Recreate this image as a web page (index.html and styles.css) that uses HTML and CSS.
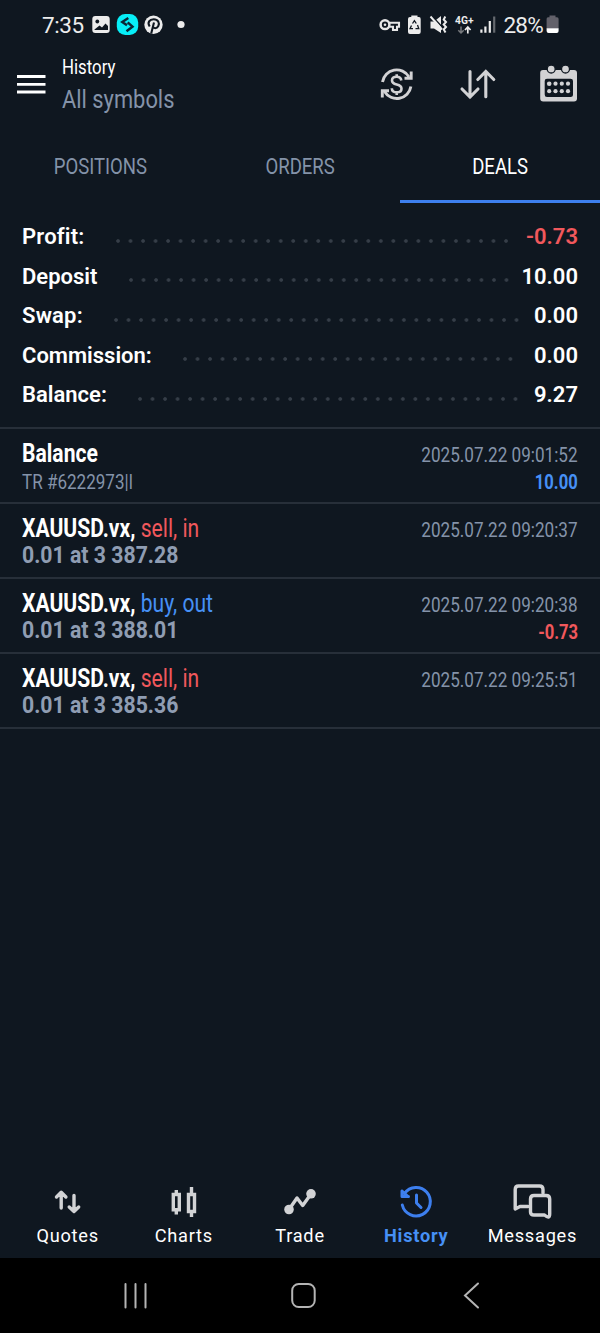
FILE: index.html
```html
<!DOCTYPE html>
<html lang="en">
<head>
<meta charset="utf-8">
<title>History</title>
<link rel="stylesheet" href="styles.css">
</head>
<body>
<div class="screen">
  <div class="status">
    <span class="clock">7:35</span>
    <svg class="st-left" width="96" height="24" viewBox="90 13 96 24">
      <rect x="92.300" y="16" width="17.400" height="17" rx="3" fill="#ececec"/>
      <circle cx="97.300" cy="21.500" r="1.900" fill="#0f1720"/>
      <path d="M94.500 29.500L99.500 25.500L102 27.500L105.500 23.500L108 26V30H94.500Z" fill="#0f1720"/>
      <rect x="116.800" y="14" width="21.400" height="21" rx="8.500" fill="#07eef7"/>
      <path d="M128.300 18L122.300 22L127 25.300M127.700 22.300L132.500 26.700L126.500 31.300" fill="none" stroke="#0b2635" stroke-width="2.500"/>
      <circle cx="153.500" cy="24.800" r="9.200" fill="#ececec"/>
      <path d="M149.700 26.500C147 22.500 149.500 19.300 153.700 19.300C158 19.300 160 23 158.200 26.300C156.800 29 153.500 28.700 152.900 26.500M154 22.600L151.200 33.500" fill="none" stroke="#0f1720" stroke-width="2.100"/>
      <circle cx="181" cy="24.500" r="3.600" fill="#ececec"/>
    </svg>
    <svg class="st-right" width="122" height="24" viewBox="377 13 122 24">
      <circle cx="385" cy="24.700" r="4.400" fill="none" stroke="#e6e6e6" stroke-width="2.500"/>
      <circle cx="385" cy="24.700" r="1.300" fill="#e6e6e6"/>
      <path d="M389.500 22.800H399V26.700H397V30H393V26.700H389.500" fill="none" stroke="#e6e6e6" stroke-width="2.100"/>
      <path d="M411.300 17V15.500H417.500V17H419Q420.700 17 420.700 19V32Q420.700 34 418.700 34H410Q408 34 408 32V19Q408 17 410 17Z" fill="#ececec"/>
      <path d="M412.500 23.500L414.400 20.700L416.300 23.500M417.500 25L418.800 28.700H415.500M413 28.700H410L411.500 25.500" fill="none" stroke="#0f1720" stroke-width="1.300"/>
      <path d="M430.500 21.500H434L441 16V33L434 28.500H430.500Z" fill="#ececec"/>
      <path d="M432.500 16.500L443 28" stroke="#0f1720" stroke-width="1.600"/>
      <path d="M430.500 16.500L442 29.500" stroke="#ececec" stroke-width="1.900"/>
      <path d="M445.300 16.500L443.700 19.500L446 22L443.700 24.500L446 27L443.700 29.500L445.500 32.500" fill="none" stroke="#ececec" stroke-width="2"/>
      <text class="net" x="455" y="23.700" textLength="18.500" lengthAdjust="spacingAndGlyphs">4G+</text>
      <path d="M461 26.500V33M458.300 30.200L461 33L463.700 30.200" fill="none" stroke="#77797d" stroke-width="1.500"/>
      <path d="M467.800 33.500V27.300M465 30L467.800 27L470.600 30" fill="none" stroke="#ececec" stroke-width="1.700"/>
      <path d="M481.400 29.500V32.700M485.400 26.500V32.700M489.800 21V32.700" stroke="#ececec" stroke-width="2.200"/>
      <path d="M494.200 16.500V32.700" stroke="#65696f" stroke-width="2.200"/>
    </svg>
    <span class="percent">28%</span>
    <svg class="st-batt" width="13" height="20" viewBox="546 14 13 20">
      <path d="M549.500 17.200V15.500H555.500V17.200H557Q558.600 17.200 558.600 19V28.500H546.600V19Q546.600 17.200 548 17.200Z" fill="#62616a"/>
      <path d="M546.600 28.300H558.600V31Q558.600 33 556.600 33H548.600Q546.600 33 546.600 31Z" fill="#fff"/>
    </svg>
  </div>

  <header class="appbar">
    <svg class="burger" width="30" height="22" viewBox="16 73 30 22"><path d="M17 76.500H45.500M17 84.300H45.500M17 92H45.500" stroke="#fff" stroke-width="2.800"/></svg>
    <div class="titles">
      <div class="title"><span class="cond t-hist">History</span></div>
      <div class="subtitle"><span class="cond t-sym">All symbols</span></div>
    </div>
    <svg class="actions" width="202" height="44" viewBox="378 62 202 44" fill="none" stroke="#d2d2d4">
      <path d="M382.500 82A14.300 14.300 0 0 1 409 77M410.900 86.500A14.300 14.300 0 0 1 384.500 91.500" stroke-width="2.900"/>
      <path d="M411.200 71.500V78.300H404.500M382.300 97.500V90.700H389" stroke-width="2.900"/>
      <path d="M401.300 80.500C401 77.800 399 76.800 396.700 76.800C393.800 76.800 392 78.300 392 80.500C392 83 394 83.800 396.700 84.500C399.600 85.200 401.500 86.200 401.500 88.700C401.500 91 399.500 92.300 396.700 92.300C394 92.300 391.900 91 391.800 88.200M396.700 74.300V77M396.700 92V95" stroke-width="2.600"/>
      <path d="M470 71.500V97M462 89L470 97L478 89M485.800 96.800V71.500M477.800 79.500L485.800 71.500L493.800 79.500" stroke-width="3.100" stroke-linecap="round"/>
      <path fill-rule="evenodd" d="M543 70H574Q577 70 577 73V98.500Q577 101.500 574 101.500H543.200Q540.200 101.500 540.200 98.500V73Q540.200 70 543 70ZM547 78.800Q544.700 78.800 544.700 81V94.500Q544.700 97 547 97H570.500Q573 97 573 94.500V81Q573 78.800 570.500 78.800Z" fill="#d2d2d4" stroke="none"/>
      <g fill="#d2d2d4" stroke="#0f1720" stroke-width="1.300"><circle cx="551.200" cy="69" r="4"/><circle cx="565.500" cy="69" r="4"/></g>
      <g fill="#d2d2d4" stroke="none"><circle cx="549.200" cy="83.700" r="2.300"/><circle cx="555.500" cy="83.700" r="2.100"/><circle cx="561.800" cy="83.700" r="2.100"/><circle cx="568" cy="83.700" r="2.100"/><circle cx="549.200" cy="91.200" r="2.100"/><circle cx="555.500" cy="91.200" r="2.100"/><circle cx="561.800" cy="91.200" r="2.100"/><circle cx="568" cy="91.200" r="2.100"/></g>
    </svg>
  </header>

  <nav class="tabs">
    <div class="tab"><span class="cond">POSITIONS</span></div>
    <div class="tab"><span class="cond">ORDERS</span></div>
    <div class="tab active"><span class="cond">DEALS</span></div>
  </nav>

  <section class="summary">
    <div class="sum profit"><span class="label">Profit:</span><i class="dots"></i><b class="value red">-0.73</b></div>
    <div class="sum deposit"><span class="label">Deposit</span><i class="dots"></i><b class="value">10.00</b></div>
    <div class="sum swap"><span class="label">Swap:</span><i class="dots"></i><b class="value">0.00</b></div>
    <div class="sum commission"><span class="label">Commission:</span><i class="dots"></i><b class="value">0.00</b></div>
    <div class="sum balance"><span class="label">Balance:</span><i class="dots"></i><b class="value">9.27</b></div>
  </section>

  <section class="deals">
    <div class="deal">
      <div class="line"><span class="cond name"><b>Balance</b></span><span class="cond date">2025.07.22 09:01:52</span></div>
      <div class="line second"><span class="cond note">TR #6222973|l</span><span class="cond result blue">10.00</span></div>
    </div>
    <div class="deal">
      <div class="line"><span class="cond name"><b>XAUUSD.vx,</b> <span class="red">sell, in</span></span><span class="cond date">2025.07.22 09:20:37</span></div>
      <div class="line second"><span class="cond volume">0.01 at 3 387.28</span></div>
    </div>
    <div class="deal">
      <div class="line"><span class="cond name"><b>XAUUSD.vx,</b> <span class="blue">buy, out</span></span><span class="cond date">2025.07.22 09:20:38</span></div>
      <div class="line second"><span class="cond volume">0.01 at 3 388.01</span><span class="cond result red">-0.73</span></div>
    </div>
    <div class="deal">
      <div class="line"><span class="cond name"><b>XAUUSD.vx,</b> <span class="red">sell, in</span></span><span class="cond date">2025.07.22 09:25:51</span></div>
      <div class="line second"><span class="cond volume">0.01 at 3 385.36</span></div>
    </div>
  </section>

  <nav class="bottom">
    <div class="item"><svg width="44" height="44" viewBox="45.800 1180 44 44"><path d="M61 1208V1193M56.300 1197L61 1192.300L65.700 1197M73.800 1195.500V1211M69 1207L73.800 1211.500L78.500 1207"/></svg><span>Quotes</span></div>
    <div class="item"><svg width="44" height="44" viewBox="161.500 1180 44 44"><path class="sharp" d="M172.800 1194.500H178.800V1209.800H172.800ZM188 1194.500H194V1211.500H188ZM175.800 1190V1194M175.800 1210V1214.500M191 1187V1194M191 1212V1217"/></svg><span>Charts</span></div>
    <div class="item"><svg width="44" height="44" viewBox="278 1180 44 44"><path d="M289 1209.500L297 1198L302.700 1205.500L311 1194"/><circle class="fill" cx="289" cy="1209.500" r="4.800"/><circle class="fill" cx="311" cy="1193.800" r="4.800"/></svg><span>Trade</span></div>
    <div class="item on"><svg width="44" height="44" viewBox="394 1180 44 44"><path d="M402.300 1205A14.200 14.200 0 1 0 404.500 1193.500M402 1191V1196.500H408.500M402 1191L408 1196.500M416.500 1195V1203L421 1207.500"/></svg><span>History</span></div>
    <div class="item"><svg width="44" height="44" viewBox="510 1180 44 44"><path d="M543 1193V1189.500Q543 1186 539.500 1186H518.500Q515.200 1186 515.200 1189.500V1209L520 1206.500H528M534 1195.500H546Q549.700 1195.500 549.700 1199V1214Q549.700 1219.500 544.500 1215H534Q530.500 1215 530.500 1212V1199Q530.500 1195.500 534 1195.500Z"/></svg><span>Messages</span></div>
  </nav>

  <div class="system">
    <svg width="30" height="30" viewBox="121 1281 30 30"><path d="M125.500 1284V1307.500M135.500 1284V1307.500M145.500 1284V1307.500"/></svg>
    <svg width="30" height="30" viewBox="288 1281 30 30"><rect x="291.200" y="1284" width="22.500" height="23" rx="6.500"/></svg>
    <svg width="30" height="30" viewBox="456 1281 30 30"><path d="M478 1283.500L465 1295.500L478 1307.500"/></svg>
  </div>
</div>
</body>
</html>
```

FILE: styles.css
```css
* { box-sizing: border-box; }
body { margin: 0; background: #0f1720; font-family: Roboto, "Liberation Sans", sans-serif; font-variant-ligatures: none; }
svg { display: block; flex: none; }
.screen { width: 600px; height: 1333px; display: flex; flex-direction: column; color: #fff; }
.red { color: #f1585c; }
.blue { color: #4690f5; }

/* Narrows the regular Roboto faces to condensed proportions */
.cond { display: inline-block; white-space: pre; transform: scaleX(.87); transform-origin: 0 50%; }

.status { height: 50px; display: flex; align-items: center; padding-left: 42px; color: #ececec; }
.clock { width: 48px; font-size: 22.500px; line-height: 24px; letter-spacing: -.4px; }
.st-right { margin-left: 191px; }
.percent { width: 42px; margin-left: 4.500px; font-size: 22.500px; line-height: 24px; letter-spacing: -.8px; }
.st-batt { margin-top: -2px; }
.net { font-size: 10px; font-weight: 700; fill: #ececec; }

.appbar { height: 80px; display: flex; padding-left: 16px; }
.burger { margin-top: 23px; }
.titles { width: 332px; padding: 4px 0 0 16.300px; }
.title { height: 26px; font-size: 20px; line-height: 27px; }
.title .cond { transform: scaleX(.84); }
.subtitle { height: 36px; font-size: 26.500px; line-height: 37px; color: #8493a9; }
.subtitle .cond { transform: scaleX(.825); }
.actions { margin: 12px 0 0; }

.tabs { height: 73px; display: flex; }
.tab { flex: 1; display: flex; justify-content: center; align-items: center; padding-top: 2px; border-bottom: 3px solid transparent; font-size: 22px; color: #8493a9; }
.tab .cond { transform: scaleX(.843); transform-origin: 50% 50%; }
.tab.active { color: #fff; border-color: #3d7fee; }

.summary { height: 226px; padding: 14px 22px 0; border-bottom: 2px solid #272f39; }
.sum { height: 39.500px; display: flex; align-items: center; }
.label { font-size: 22px; font-weight: 600; }
.profit .label, .swap .label { letter-spacing: .2px; }
.value { margin-left: auto; font-size: 22px; font-weight: 600; }
.dots { height: 4px; margin-top: 7.500px; background: radial-gradient(circle at 2px 2px, #363e48 1.400px, transparent 2.200px) 0 0 / 12.520px 4px repeat-x; }
.profit .label { width: 93.500px; } .profit .dots { width: 393px; }
.deposit .label { width: 107px; } .deposit .dots { width: 380px; }
.swap .label { width: 92px; } .swap .dots { width: 405px; }
.commission .label { width: 161px; } .commission .dots { width: 330px; }
.balance .label { width: 116px; } .balance .dots { width: 380px; }

.deals { flex: 1; }
.deal { height: 75px; padding: 10px 22px 0; border-bottom: 2px solid #272f39; }
.line { height: 28px; display: flex; justify-content: space-between; align-items: center; }
.name { font-size: 25px; transform: scaleX(.844); }
.date, .note, .result { font-size: 20px; color: #8493a9; }
.note { transform: scaleX(.853); margin-top: 1px; }
.date, .result { transform: scaleX(.856); transform-origin: 100% 50%; }
.date { margin-top: 3px; }
.volume { font-size: 24.500px; font-weight: 700; color: #8f9db3; margin-top: -3px; transform: scaleX(.867); }
.result { font-weight: 700; margin: 1px 0 0 auto; transform: scaleX(.83); }
.result.blue { color: #4690f5; }
.result.red { color: #f1585c; }

.bottom { height: 88px; display: flex; padding: 10px 9.500px 0; }
.item { flex: 1; display: flex; flex-direction: column; align-items: center; font-size: 18.200px; line-height: 24px; letter-spacing: .75px; }
.item svg { fill: none; stroke: #d2d3d5; stroke-width: 3.400; stroke-linecap: round; stroke-linejoin: round; }
.item .sharp { stroke-linecap: butt; stroke-linejoin: miter; }
.item .fill { fill: #d2d3d5; stroke: none; }
.item.on { color: #4690f5; font-weight: 700; }
.item.on svg { stroke: #3d7fee; stroke-width: 3; }

.system { height: 75px; display: flex; align-items: center; padding-left: 121px; gap: 137.500px; background: #000; }
.system svg { fill: none; stroke: #b4b4b4; stroke-width: 2; stroke-linecap: round; }
```
